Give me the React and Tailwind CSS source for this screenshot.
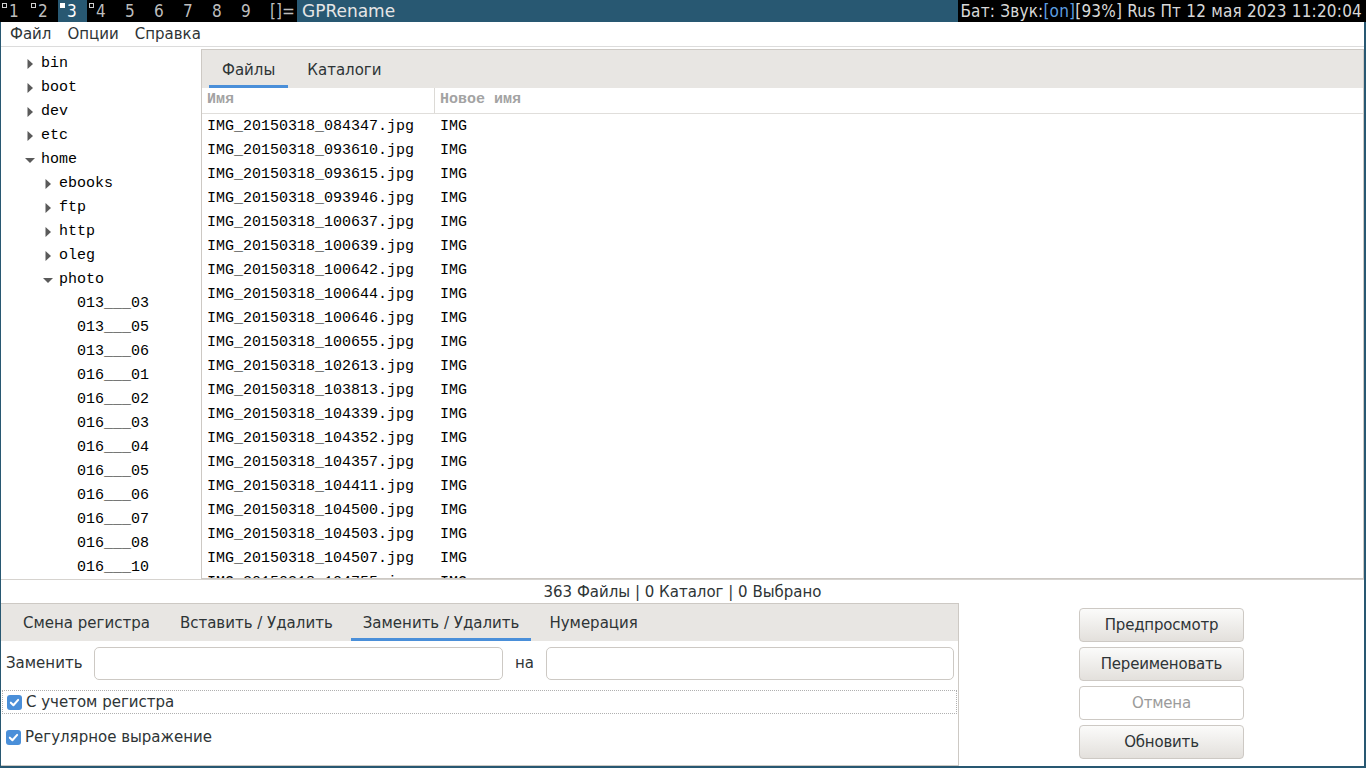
const files = [
  "084347", "093610", "093615", "093946", "100637", "100639", "100642", "100644",
  "100646", "100655", "102613", "103813", "104339", "104352", "104357", "104411",
  "104500", "104503", "104507", "104755",
];

const tree = [
  { name: "bin", level: 0, state: "closed" },
  { name: "boot", level: 0, state: "closed" },
  { name: "dev", level: 0, state: "closed" },
  { name: "etc", level: 0, state: "closed" },
  { name: "home", level: 0, state: "open" },
  { name: "ebooks", level: 1, state: "closed" },
  { name: "ftp", level: 1, state: "closed" },
  { name: "http", level: 1, state: "closed" },
  { name: "oleg", level: 1, state: "closed" },
  { name: "photo", level: 1, state: "open" },
  ...["013___03", "013___05", "013___06", "016___01", "016___02", "016___03", "016___04",
    "016___05", "016___06", "016___07", "016___08", "016___10"].map((n) => ({ name: n, level: 2, state: "leaf" })),
];

const workspaces = ["1", "2", "3", "4", "5", "6", "7", "8", "9"];
const occupied = ["1", "2", "3", "4"];

const ui = { fontFamily: '"DejaVu Sans", "Noto Sans", sans-serif' };
const bar = { fontFamily: '"DejaVu Sans Condensed", "DejaVu Sans", sans-serif', fontStretch: "condensed" };
const title = { fontFamily: '"DejaVu Sans", sans-serif', fontStretch: "normal" };
const mono = { fontFamily: '"Liberation Mono", "DejaVu Sans Mono", monospace' };

const Arrow = ({ open }) =>
  open ? (
    <svg width="10" height="10" viewBox="0 0 10 10" className="shrink-0">
      <path d="M0 3 L10 3 L5 8 Z" fill="#5a5a5a" />
    </svg>
  ) : (
    <svg width="10" height="10" viewBox="0 0 10 10" className="shrink-0">
      <path d="M2.5 0 L8 5 L2.5 10 Z" fill="#5a5a5a" />
    </svg>
  );

const Check = () => (
  <span className="w-[15px] h-[15px] rounded-[3px] bg-[#4a8fd9] flex items-center justify-center shrink-0">
    <svg width="11" height="11" viewBox="0 0 12 12">
      <path d="M2 6.2 L4.8 9 L10 3.2" stroke="white" strokeWidth="2.2" fill="none" strokeLinecap="round" strokeLinejoin="round" />
    </svg>
  </span>
);

const Btn = ({ children, disabled }) => (
  <div
    className={
      "h-[34px] w-[165px] rounded-[4px] border border-[#cdc9c4] flex items-center justify-center text-[15px] tracking-[-0.2px] " +
      (disabled ? "bg-white text-[#9b9b9b]" : "bg-linear-to-b from-[#fbfbfa] to-[#e3e0dc] text-[#2e3436]")
    }
  >
    {children}
  </div>
);

const Tab = ({ children, active, wide }) => (
  <div className={"relative flex items-center pt-[2px] " + (wide ? "px-[16px]" : "px-[15px]")}>
    {children}
    {active && <span className="absolute left-[3px] right-[3px] bottom-0 h-[3px] bg-[#4a8fd9]" />}
  </div>
);

export default function App() {
  return (
    <div className="w-[1366px] h-[768px] flex flex-col bg-white overflow-hidden" style={ui}>
      {/* i3 bar */}
      <div className="h-[22px] bg-black flex items-stretch text-[17px] leading-[22px] shrink-0" style={bar}>
        {workspaces.map((w) => (
          <div
            key={w}
            className={"relative w-[29px] pl-[9px] " + (w === "3" ? "bg-[#285872] text-white" : "text-[#bdbdbd]")}
          >
            {occupied.includes(w) && (
              <span
                className={
                  "absolute left-[2px] top-[3px] w-[5px] h-[5px] " +
                  (w === "3" ? "bg-white" : "border border-[#cfcfcf]")
                }
              />
            )}
            {w}
          </div>
        ))}
        <div className="w-[36px] pl-[9px] text-[#bdbdbd]">[]=</div>
        <div className="flex-1 bg-[#285872] text-[#e6e6e6] pl-[5px] text-[17px]" style={title}>GPRename</div>
        <div className="shrink-0 pl-[2px] pr-[4px] text-[#d8d8d8] whitespace-nowrap tracking-[0.2px]">
          Бат: Звук:<span className="text-[#5d9ee0]">[on]</span>[93%] Rus Пт 12 мая 2023 11:20:04
        </div>
      </div>

      {/* window */}
      <div className="flex-1 flex flex-col border-l border-r-2 border-b-2 border-[#285872] min-h-0">
        {/* menu */}
        <div className="h-[25px] border-b border-[#dcdcdc] flex items-center gap-[16px] pl-[9px] text-[15px] text-[#2e3436] shrink-0">
          <span>Файл</span>
          <span>Опции</span>
          <span>Справка</span>
        </div>

        {/* main panes */}
        <div className="h-[532px] flex pt-[2px] shrink-0">
          <div className="w-[200px] overflow-hidden text-[15px] text-black pt-[3px]" style={mono}>
            {tree.map((t) => (
              <div
                key={t.name}
                className="h-[24px] flex items-center"
                style={{ paddingLeft: 24 + t.level * 18 }}
              >
                <span className="w-[16px] flex items-center">
                  {t.state !== "leaf" && <Arrow open={t.state === "open"} />}
                </span>
                {t.name}
              </div>
            ))}
          </div>
          <div className="flex-1 border border-[#cdc9c4] flex flex-col overflow-hidden">
            <div className="h-[38px] bg-[#e8e6e3] flex items-stretch pl-[4px] text-[15px] text-[#2e3436] shrink-0">
              <Tab active wide>Файлы</Tab>
              <Tab wide>Каталоги</Tab>
            </div>
            <div className="h-[26px] flex border-b border-[#e0dedb] text-[15px] font-bold text-[#a3a3a3] shrink-0" style={mono}>
              <div className="w-[233px] border-r border-[#dcdad6] pl-[5px] flex items-center">Имя</div>
              <div className="pl-[5px] flex items-center">Новое имя</div>
            </div>
            <div className="flex-1 overflow-hidden text-[15px] text-black pt-[1px]" style={mono}>
              {files.map((f) => (
                <div key={f} className="h-[24px] flex items-center">
                  <div className="w-[234px] pl-[5px]">IMG_20150318_{f}.jpg</div>
                  <div className="pl-[4px]">IMG</div>
                </div>
              ))}
            </div>
          </div>
        </div>

        {/* status */}
        <div className="h-[24px] border-t border-[#d6d3cf] flex items-center justify-center text-[15px] leading-[20px] text-[#2e3436] shrink-0">
          363 Файлы | 0 Каталог | 0 Выбрано
        </div>

        {/* bottom */}
        <div className="flex-1 flex min-h-0">
          <div className="w-[958px] border-r border-t border-b border-[#cdc9c4] flex flex-col">
            <div className="h-[37px] bg-[#e8e6e3] flex items-stretch pl-[7px] text-[15px] text-[#2e3436] shrink-0">
              <Tab>Смена регистра</Tab>
              <Tab>Вставить / Удалить</Tab>
              <Tab active>Заменить / Удалить</Tab>
              <Tab>Нумерация</Tab>
            </div>
            <div className="flex items-center h-[44px] text-[15px] text-[#2e3436] pl-[5px] pr-[4px]">
              <span className="w-[88px]">Заменить</span>
              <div className="w-[409px] h-[33px] rounded-[5px] border border-[#cdc9c4] bg-white" />
              <span className="w-[43px] text-center">на</span>
              <div className="flex-1 h-[33px] rounded-[5px] border border-[#cdc9c4] bg-white" />
            </div>
            <div className="mt-[5px] h-[24px] mx-[1px] border border-dotted border-[#b0b0b0] flex items-center gap-[4px] pl-[4px] text-[15px] text-[#2e3436]">
              <Check />
              <span>С учетом регистра</span>
            </div>
            <div className="mt-[11px] h-[24px] flex items-center gap-[4px] pl-[5px] text-[15px] text-[#2e3436]">
              <Check />
              <span>Регулярное выражение</span>
            </div>
          </div>
          <div className="flex-1 flex flex-col gap-[5px] pt-[5px] pl-[120px]">
            <Btn>Предпросмотр</Btn>
            <Btn>Переименовать</Btn>
            <Btn disabled>Отмена</Btn>
            <Btn>Обновить</Btn>
          </div>
        </div>
      </div>
    </div>
  );
}
